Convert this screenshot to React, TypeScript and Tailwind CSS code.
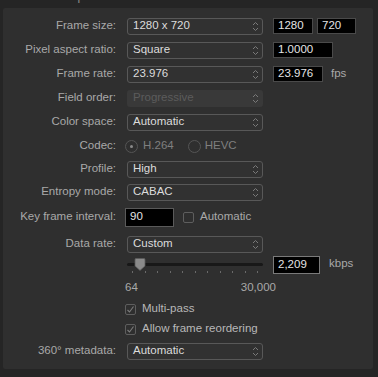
import React from "react";

const Chevrons = () => (
  <svg width="7" height="11" viewBox="0 0 7 11" fill="none" stroke="#7a7a7a" strokeWidth="1" className="shrink-0">
    <path d="M1 4 L3.5 1.5 L6 4" />
    <path d="M1 7 L3.5 9.5 L6 7" />
  </svg>
);

const Select = ({ value, disabled = false }: { value: string; disabled?: boolean }) => (
  <div
    className={
      disabled
        ? "w-[136px] h-[17px] rounded-[3px] bg-[#393939] flex items-center justify-between pl-[6px] pr-[4px] text-[#5c5c5c]"
        : "w-[136px] h-[17px] rounded-[3px] border border-[#585858] bg-[#313131] flex items-center justify-between pl-[5px] pr-[3px] text-[#dcdcdc]"
    }
  >
    <span>{value}</span>
    <Chevrons />
  </div>
);

const Field = ({ value, w }: { value: string; w: string }) => (
  <div className={`${w} h-[16px] bg-black border border-[#4a4a4a] flex items-center pl-[4px] text-[#e4e4e4]`}>{value}</div>
);

const Check = ({ checked = false }: { checked?: boolean }) => (
  <div className="w-[11px] h-[11px] rounded-[2px] border border-[#5e5e5e] flex items-center justify-center shrink-0">
    {checked && (
      <svg width="9" height="9" viewBox="0 0 9 9" fill="none" stroke="#7c7c7c" strokeWidth="1.1">
        <path d="M1.5 5 L3.5 7 L7.5 1.5" />
      </svg>
    )}
  </div>
);

const Radio = ({ on = false }: { on?: boolean }) => (
  <div className="w-[13px] h-[13px] rounded-full border border-[#555] flex items-center justify-center shrink-0">
    {on && <div className="w-[3px] h-[3px] rounded-full bg-[#8a8a8a]" />}
  </div>
);

const Row = ({ label, h, children }: { label?: string; h: string; children?: React.ReactNode }) => (
  <div className={`flex items-center ${h}`}>
    <div className="w-[113px] text-right text-[#a9a9a9] shrink-0">{label}</div>
    <div className="ml-[11px] flex items-center">{children}</div>
  </div>
);

export default function App() {
  const ticks = Array.from({ length: 11 });
  return (
    <div
      className="w-[378px] h-[377px] bg-[#252525] overflow-hidden text-[11.5px] leading-none"
      style={{ fontFamily: '"Liberation Sans", Arial, sans-serif' }}
    >
      <div className="h-[8px] overflow-hidden pl-[25px]">
        <div className="mt-[-10px] text-[12px] text-[#8a8a8a]">Video Properties</div>
      </div>
      <div className="ml-[3px] w-[370px] h-[361px] bg-[#2f2f2f] rounded-[2px] pt-[6px]">
        <Row label="Frame size:" h="h-[24px]">
          <Select value="1280 x 720" />
          <div className="ml-[10px] flex gap-[4px]">
            <Field value="1280" w="w-[40px]" />
            <Field value="720" w="w-[39px]" />
          </div>
        </Row>
        <Row label="Pixel aspect ratio:" h="h-[24px]">
          <Select value="Square" />
          <div className="ml-[10px]">
            <Field value="1.0000" w="w-[60px]" />
          </div>
        </Row>
        <Row label="Frame rate:" h="h-[24px]">
          <Select value="23.976" />
          <div className="ml-[10px] flex items-center">
            <Field value="23.976" w="w-[50px]" />
            <span className="ml-[8px] text-[#a9a9a9]">fps</span>
          </div>
        </Row>
        <Row label="Field order:" h="h-[24px]">
          <Select value="Progressive" disabled />
        </Row>
        <Row label="Color space:" h="h-[24px]">
          <Select value="Automatic" />
        </Row>
        <Row label="Codec:" h="h-[24px]">
          <div className="flex items-center -ml-[2px]">
            <Radio on />
            <span className="ml-[5px] text-[#7f7f7f]">H.264</span>
            <div className="ml-[14px]">
              <Radio />
            </div>
            <span className="ml-[4px] text-[#7f7f7f]">HEVC</span>
          </div>
        </Row>
        <Row label="Profile:" h="h-[22px]">
          <Select value="High" />
        </Row>
        <Row label="Entropy mode:" h="h-[24px]">
          <Select value="CABAC" />
        </Row>
        <Row label="Key frame interval:" h="h-[26px]">
          <div className="flex items-center -ml-[2px]">
            <div className="w-[49px] h-[19px] bg-black border border-[#5a5a5a] flex items-center pl-[4px] text-[#e4e4e4]">90</div>
            <div className="ml-[9px]">
              <Check />
            </div>
            <span className="ml-[6px] text-[#a9a9a9]">Automatic</span>
          </div>
        </Row>
        <Row label="Data rate:" h="h-[28px]">
          <Select value="Custom" />
        </Row>
        <Row h="h-[20px]">
          <div className="flex items-center">
            <div className="w-[136px] flex flex-col">
              <div className="h-[3px] bg-[#181818] rounded-full flex items-center">
                <div className="ml-[7px] w-[12px] h-[13px] flex">
                  <svg width="12" height="13" viewBox="0 0 12 13">
                    <path d="M1 1.5 Q1 0.5 2 0.5 L10 0.5 Q11 0.5 11 1.5 L11 8 L6 12.5 L1 8 Z" fill="#8a8a8a" stroke="#5a5a5a" strokeWidth="0.8" />
                  </svg>
                </div>
              </div>
              <div className="flex justify-between px-[5px] mt-[5px]">
                {ticks.map((_, i) => (
                  <div key={i} className="w-[1px] h-[2px] bg-[#6a6a6a]" />
                ))}
              </div>
            </div>
            <div className="ml-[10px] w-[47px] h-[18px] bg-black border border-[#7a7a7a] flex items-center pl-[4px] text-[#e4e4e4] mt-[-6px]">
              2,209
            </div>
            <span className="ml-[9px] text-[#a9a9a9] mt-[-8px]">kbps</span>
          </div>
        </Row>
        <Row h="h-[20px]">
          <div className="w-[151px] flex justify-between -ml-[2px] text-[#a9a9a9]">
            <span>64</span>
            <span>30,000</span>
          </div>
        </Row>
        <Row h="h-[22px]">
          <div className="flex items-center -ml-[2px]">
            <Check checked />
            <span className="ml-[6px] text-[#b8b8b8]">Multi-pass</span>
          </div>
        </Row>
        <Row h="h-[18px]">
          <div className="flex items-center -ml-[2px]">
            <Check checked />
            <span className="ml-[6px] text-[#b8b8b8]">Allow frame reordering</span>
          </div>
        </Row>
        <Row label="360° metadata:" h="h-[26px]">
          <Select value="Automatic" />
        </Row>
      </div>
    </div>
  );
}
